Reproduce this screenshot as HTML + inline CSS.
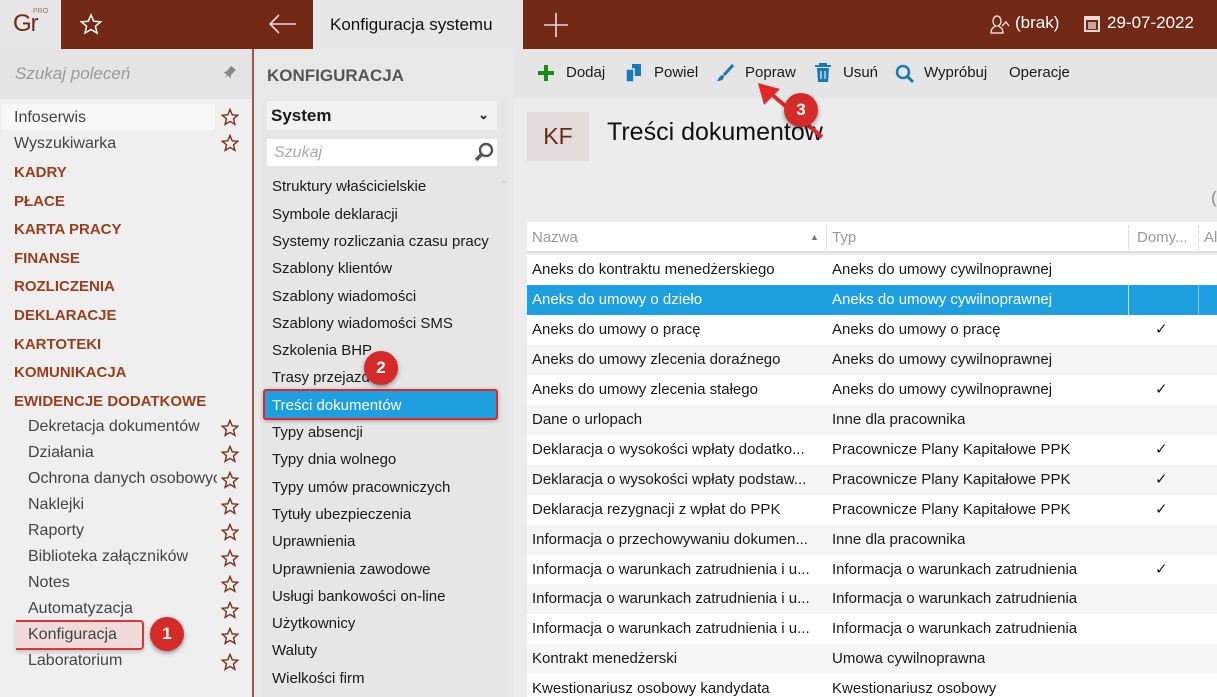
<!DOCTYPE html>
<html><head><meta charset="utf-8"><style>
*{margin:0;padding:0;box-sizing:border-box}
html,body{width:1217px;height:697px;overflow:hidden}
body{font-family:"Liberation Sans",sans-serif;background:#ececec;position:relative;color:#1a1a1a}
.a{position:absolute}
.top{left:0;top:0;width:1217px;height:49px;background:#722915}
.logo{left:0;top:0;width:61px;height:49px;background:#e6e6e6}
.tab{left:313px;top:0;width:210px;height:49px;background:#e6e6e6;font-size:17px;line-height:49px;padding-left:17px;color:#111}
.left{left:0;top:49px;width:252px;height:648px;background:#efefef}
.search{left:0;top:49px;width:252px;height:50px;background:#e4e4e4}
.div{left:252px;top:49px;width:2px;height:648px;background:#9a5a48}
.mid{left:254px;top:49px;width:259px;height:648px;background:#e8e8e8}
.tb{left:513px;top:49px;width:704px;height:49px;background:#e5e5e5}
.li{position:absolute;font-size:16px;color:#444}
.cat{position:absolute;font-size:15px;font-weight:bold;color:#9a3f1e}
.ml{position:absolute;left:272px;font-size:15px;color:#1a1a1a}
.star{position:absolute;left:221px;width:18px;height:18px}
.tbi{position:absolute;top:64px;font-size:15px;color:#1a1a1a}
.row{position:absolute;left:527px;width:690px;height:30px;font-size:15px;line-height:30px}
.row span{position:absolute;white-space:nowrap;overflow:hidden}
.badge{position:absolute;width:34px;height:34px;border-radius:50%;background:#d42a2a;color:#fff;font-weight:bold;font-size:17px;text-align:center;line-height:34px;box-shadow:0 2px 5px rgba(0,0,0,.4)}
</style></head><body>
<div class="a top"></div>
<div class="a logo"><span style="position:absolute;left:13px;top:10px;font-size:24px;color:#722915;letter-spacing:-1px">Gr</span><span style="position:absolute;left:33px;top:8px;font-size:7px;color:#a07060">PRO</span></div>
<svg class="a" style="left:80px;top:13px" width="22" height="22" viewBox="0 0 24 24"><path d="M12 2l3 7 7.5.6-5.7 4.9 1.8 7.4L12 18l-6.6 3.9 1.8-7.4L1.5 9.6 9 9z" fill="none" stroke="#fff" stroke-width="1.6"/></svg>
<svg class="a" style="left:268px;top:14px" width="28" height="20"><path d="M2 10h26M11 1L2 10l9 9" fill="none" stroke="#eadbd6" stroke-width="1.6"/></svg>
<div class="a tab">Konfiguracja systemu</div>
<svg class="a" style="left:544px;top:13px" width="24" height="24"><path d="M12 0v24M0 12h24" stroke="#eadbd6" stroke-width="1.6"/></svg>
<svg class="a" style="left:988px;top:14px" width="22" height="20"><path d="M3 19c0-5 3-6 5-7-2-1-3-3-3-5 0-3 2-5 4-5s4 2 4 5c0 2-1 4-3 5 2 1 5 2 5 7zM14 12l4-4 3 4" fill="none" stroke="#eadbd6" stroke-width="1.4"/></svg>
<div class="a" style="left:1015px;top:13px;font-size:17px;color:#fff">(brak)</div>
<div class="a" style="left:1084px;top:16px;width:16px;height:16px;border:2px solid #eadbd6;border-top-width:4px"><div style="margin:2px;height:7px;background:#eadbd6;opacity:.7"></div></div>
<div class="a" style="left:1107px;top:13px;font-size:17px;color:#fff">29-07-2022</div>

<div class="a left"></div>
<div class="a search"></div>
<div class="a" style="left:15px;top:64px;font-size:17px;font-style:italic;color:#999">Szukaj poleceń</div>
<div class="a" style="left:224px;top:66px;width:10px;height:14px;background:#888;transform:rotate(40deg);clip-path:polygon(20% 0,80% 0,80% 55%,100% 70%,55% 70%,50% 100%,45% 70%,0 70%,20% 55%)"></div>
<div class="a" style="left:2px;top:104px;width:213px;height:26px;background:#f8f8f8"></div>
<div class="li" style="left:14px;top:109px">Infoserwis</div>
<div class="li" style="left:14px;top:135px">Wyszukiwarka</div>
<div class="cat" style="left:14px;top:164px">KADRY</div>
<div class="cat" style="left:14px;top:193px">PŁACE</div>
<div class="cat" style="left:14px;top:221px">KARTA PRACY</div>
<div class="cat" style="left:14px;top:250px">FINANSE</div>
<div class="cat" style="left:14px;top:278px">ROZLICZENIA</div>
<div class="cat" style="left:14px;top:307px">DEKLARACJE</div>
<div class="cat" style="left:14px;top:336px">KARTOTEKI</div>
<div class="cat" style="left:14px;top:364px">KOMUNIKACJA</div>
<div class="cat" style="left:14px;top:393px">EWIDENCJE DODATKOWE</div>
<div class="a" style="left:16px;top:620px;width:128px;height:30px;background:#f0dada;border:2px solid #d9383a;border-left:none;border-radius:0 4px 4px 0;box-shadow:0 2px 4px rgba(0,0,0,.2)"></div>
<div class="li" style="left:28px;top:418px">Dekretacja dokumentów</div>
<div class="li" style="left:28px;top:444px">Działania</div>
<div class="li" style="left:28px;top:470px;width:189px;overflow:hidden;white-space:nowrap">Ochrona danych osobowych</div>
<div class="li" style="left:28px;top:496px">Naklejki</div>
<div class="li" style="left:28px;top:522px">Raporty</div>
<div class="li" style="left:28px;top:548px">Biblioteka załączników</div>
<div class="li" style="left:28px;top:574px">Notes</div>
<div class="li" style="left:28px;top:600px">Automatyzacja</div>
<div class="li" style="left:28px;top:626px">Konfiguracja</div>
<div class="li" style="left:28px;top:652px">Laboratorium</div>
<div class="badge" style="left:150px;top:617px">1</div>
<svg width="0" height="0" style="position:absolute"><defs><path id="st" d="M9 1.5l2.2 5.3 5.6.4-4.3 3.7 1.4 5.5L9 13.4l-4.9 3 1.4-5.5L1.2 7.2l5.6-.4z" fill="none" stroke="#7a2f1a" stroke-width="1.4"/></defs></svg>
<svg class="star" style="top:108px"><use href="#st"/></svg>
<svg class="star" style="top:134px"><use href="#st"/></svg>
<svg class="star" style="top:419px"><use href="#st"/></svg>
<svg class="star" style="top:445px"><use href="#st"/></svg>
<svg class="star" style="top:471px"><use href="#st"/></svg>
<svg class="star" style="top:497px"><use href="#st"/></svg>
<svg class="star" style="top:523px"><use href="#st"/></svg>
<svg class="star" style="top:549px"><use href="#st"/></svg>
<svg class="star" style="top:575px"><use href="#st"/></svg>
<svg class="star" style="top:601px"><use href="#st"/></svg>
<svg class="star" style="top:627px"><use href="#st"/></svg>
<svg class="star" style="top:653px"><use href="#st"/></svg>

<div class="a div"></div>
<div class="a mid"></div>
<div class="a" style="left:267px;top:66px;font-size:17px;font-weight:bold;color:#555">KONFIGURACJA</div>
<div class="a" style="left:263px;top:99px;width:247px;height:598px;background:#e6e6e6"></div>
<div class="a" style="left:267px;top:101px;width:230px;height:29px;background:#f2f2f2;font-size:17px;font-weight:bold;line-height:29px;padding-left:4px">System<span style="position:absolute;right:8px;top:-1px;font-size:13px">&#8964;</span></div>
<div class="a" style="left:267px;top:139px;width:230px;height:27px;background:#fff;font-size:16px;font-style:italic;color:#aaa;line-height:27px;padding-left:7px">Szukaj</div>
<svg class="a" style="left:474px;top:142px" width="20" height="20"><circle cx="12" cy="8" r="6" fill="none" stroke="#555" stroke-width="2.4"/><path d="M8 12l-6 6" stroke="#555" stroke-width="3.5"/></svg>
<div class="a" style="left:499px;top:178px;color:#ccc;font-size:12px">&#8963;</div>
<div class="ml" style="top:178px">Struktury właścicielskie</div>
<div class="ml" style="top:206px">Symbole deklaracji</div>
<div class="ml" style="top:233px">Systemy rozliczania czasu pracy</div>
<div class="ml" style="top:260px">Szablony klientów</div>
<div class="ml" style="top:288px">Szablony wiadomości</div>
<div class="ml" style="top:315px">Szablony wiadomości SMS</div>
<div class="ml" style="top:342px">Szkolenia BHP</div>
<div class="ml" style="top:369px">Trasy przejazdu</div>
<div class="a" style="left:263px;top:389px;width:235px;height:31px;background:#1e9fdf;border:2px solid #e0282a;border-radius:3px;box-shadow:0 1px 4px rgba(0,0,0,.3)"></div>
<div class="ml" style="top:397px;color:#fff">Treści dokumentów</div>
<div class="ml" style="top:424px">Typy absencji</div>
<div class="ml" style="top:451px">Typy dnia wolnego</div>
<div class="ml" style="top:479px">Typy umów pracowniczych</div>
<div class="ml" style="top:506px">Tytuły ubezpieczenia</div>
<div class="ml" style="top:533px">Uprawnienia</div>
<div class="ml" style="top:561px">Uprawnienia zawodowe</div>
<div class="ml" style="top:588px">Usługi bankowości on-line</div>
<div class="ml" style="top:615px">Użytkownicy</div>
<div class="ml" style="top:642px">Waluty</div>
<div class="ml" style="top:670px">Wielkości firm</div>
<div class="badge" style="left:364px;top:351px">2</div>

<div class="a tb"></div>
<svg class="a" style="left:538px;top:65px" width="16" height="16"><path d="M8 0v16M0 8h16" stroke="#1e8a1e" stroke-width="4"/></svg>
<div class="tbi" style="left:566px">Dodaj</div>
<svg class="a" style="left:626px;top:64px" width="16" height="18"><rect x="6" y="0" width="9" height="12" fill="#1a78b8"/><rect x="0" y="5" width="8" height="13" fill="#1a78b8" stroke="#e5e5e5" stroke-width="1.5"/></svg>
<div class="tbi" style="left:654px">Powiel</div>
<svg class="a" style="left:716px;top:64px" width="18" height="18"><path d="M17 1L8 11" stroke="#1a78b8" stroke-width="3"/><path d="M7 11c-3 0-4 3-6 6 4 0 7-1 7-5z" fill="#1a78b8"/></svg>
<div class="tbi" style="left:745px">Popraw</div>
<svg class="a" style="left:815px;top:63px" width="16" height="19"><path d="M0 3h16M5 3V1h6v2" stroke="#1a78b8" stroke-width="2" fill="none"/><path d="M2 5h12l-1 14H3z" fill="#1a78b8"/><path d="M6 8v8M10 8v8" stroke="#e5e5e5" stroke-width="1.3"/></svg>
<div class="tbi" style="left:843px">Usuń</div>
<svg class="a" style="left:895px;top:64px" width="20" height="20"><circle cx="8" cy="8" r="6" fill="none" stroke="#1a78b8" stroke-width="2.5"/><path d="M12 12l6 6" stroke="#1a78b8" stroke-width="3"/></svg>
<div class="tbi" style="left:924px">Wypróbuj</div>
<div class="tbi" style="left:1009px">Operacje</div>

<div class="a" style="left:527px;top:112px;width:62px;height:49px;background:#e3dbd9;font-size:23px;color:#6a2a16;text-align:center;line-height:49px">KF</div>
<div class="a" style="left:607px;top:118px;font-size:25px;color:#111">Treści dokumentów</div>
<div class="a" style="left:1211px;top:188px;font-size:17px;color:#888">(</div>
<svg class="a" style="left:750px;top:75px" width="80" height="70"><path d="M20 18L72 62" stroke="#e0282a" stroke-width="4"/><path d="M8 8L30 14 14 30z" fill="#e0282a"/></svg>
<div class="badge" style="left:784px;top:93px">3</div>

<div class="a" style="left:527px;top:222px;width:690px;height:31px;background:#fff;border-bottom:2px solid #ddd;font-size:15px;color:#999;line-height:31px">
<span style="position:absolute;left:5px">Nazwa</span><span style="position:absolute;left:283px;font-size:9px;color:#777">&#9650;</span>
<span style="position:absolute;left:299px;top:4px;height:24px;border-left:1px dotted #ccc"></span><span style="position:absolute;left:305px">Typ</span>
<span style="position:absolute;left:601px;top:4px;height:24px;border-left:1px dotted #ccc"></span><span style="position:absolute;left:610px">Domy...</span>
<span style="position:absolute;left:671px;top:4px;height:24px;border-left:1px dotted #ccc"></span><span style="position:absolute;left:677px">Al</span>
</div>
<div class="a" style="left:527px;top:255px;width:690px;height:442px;background:#fff"></div>
<div class="row" style="top:255px;background:#fff"><span style="left:5px">Aneks do kontraktu menedżerskiego</span><span style="left:305px">Aneks do umowy cywilnoprawnej</span></div>
<div class="row" style="top:285px;background:#1e9fdf;color:#fff"><span style="left:5px">Aneks do umowy o dzieło</span><span style="left:305px">Aneks do umowy cywilnoprawnej</span><span style="left:601px;top:0;height:30px;border-left:1px solid #cde"></span><span style="left:671px;top:0;height:30px;border-left:1px solid #7cc"></span></div>
<div class="row" style="top:315px;background:#fff"><span style="left:5px">Aneks do umowy o pracę</span><span style="left:305px">Aneks do umowy o pracę</span><span style="left:628px">✓</span></div>
<div class="row" style="top:345px;background:#f5f5f5"><span style="left:5px">Aneks do umowy zlecenia doraźnego</span><span style="left:305px">Aneks do umowy cywilnoprawnej</span></div>
<div class="row" style="top:375px;background:#fff"><span style="left:5px">Aneks do umowy zlecenia stałego</span><span style="left:305px">Aneks do umowy cywilnoprawnej</span><span style="left:628px">✓</span></div>
<div class="row" style="top:405px;background:#f5f5f5"><span style="left:5px">Dane o urlopach</span><span style="left:305px">Inne dla pracownika</span></div>
<div class="row" style="top:435px;background:#fff"><span style="left:5px">Deklaracja o wysokości wpłaty dodatko...</span><span style="left:305px">Pracownicze Plany Kapitałowe PPK</span><span style="left:628px">✓</span></div>
<div class="row" style="top:465px;background:#f5f5f5"><span style="left:5px">Deklaracja o wysokości wpłaty podstaw...</span><span style="left:305px">Pracownicze Plany Kapitałowe PPK</span><span style="left:628px">✓</span></div>
<div class="row" style="top:495px;background:#fff"><span style="left:5px">Deklaracja rezygnacji z wpłat do PPK</span><span style="left:305px">Pracownicze Plany Kapitałowe PPK</span><span style="left:628px">✓</span></div>
<div class="row" style="top:525px;background:#f5f5f5"><span style="left:5px">Informacja o przechowywaniu dokumen...</span><span style="left:305px">Inne dla pracownika</span></div>
<div class="row" style="top:555px;background:#fff"><span style="left:5px">Informacja o warunkach zatrudnienia i u...</span><span style="left:305px">Informacja o warunkach zatrudnienia</span><span style="left:628px">✓</span></div>
<div class="row" style="top:584px;background:#f5f5f5"><span style="left:5px">Informacja o warunkach zatrudnienia i u...</span><span style="left:305px">Informacja o warunkach zatrudnienia</span></div>
<div class="row" style="top:614px;background:#fff"><span style="left:5px">Informacja o warunkach zatrudnienia i u...</span><span style="left:305px">Informacja o warunkach zatrudnienia</span></div>
<div class="row" style="top:644px;background:#f5f5f5"><span style="left:5px">Kontrakt menedżerski</span><span style="left:305px">Umowa cywilnoprawna</span></div>
<div class="row" style="top:674px;background:#fff;height:23px"><span style="left:5px">Kwestionariusz osobowy kandydata</span><span style="left:305px">Kwestionariusz osobowy</span></div>
</body></html>
